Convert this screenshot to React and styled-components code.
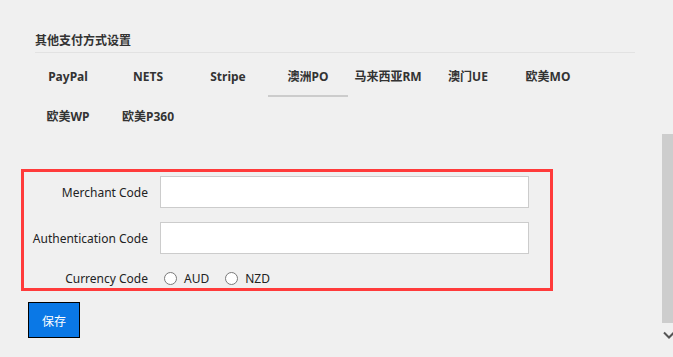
import { useState } from "react";
import styled, { createGlobalStyle } from "styled-components";

const GlobalStyle = createGlobalStyle`
  html, body {
    margin: 0;
    padding: 0;
    background: #f0f0f0;
    font-family: "Noto Sans", "Noto Sans CJK SC", sans-serif;
    color: #333;
  }
`;

const Screen = styled.div`
  display: flex;
  width: 673px;
  height: 357px;
  overflow: hidden;
`;

const Main = styled.div`
  flex: 1;
  padding-left: 21px;
`;

const Heading = styled.div`
  margin: 30px 27px 0 14px;
  height: 22px;
  line-height: 20px;
  font-family: "Noto Sans CJK SC", sans-serif;
  font-size: 12px;
  font-weight: 700;
  color: #333;
  border-bottom: 1px solid #e2e2e2;
`;

const TabGrid = styled.div`
  display: flex;
  flex-wrap: wrap;
  width: 607px;
  margin: 4px 0 0 7px;
`;

const Tab = styled.div`
  width: 80px;
  height: 38px;
  display: flex;
  align-items: center;
  justify-content: center;
  border-bottom: 2px solid ${(p) => (p.$active ? "#cccccc" : "transparent")};
  font-family: "Noto Sans", "Noto Sans CJK SC", sans-serif;
  font-size: 12px;
  font-weight: 700;
  color: #333;
  cursor: pointer;
`;

const FormBox = styled.div`
  width: 526px;
  margin-top: 32px;
  padding: 4px 0 0;
  height: 112px;
  border: 3px solid #ff3b3b;
  display: grid;
  grid-template-columns: 124px 369px;
  grid-auto-rows: auto;
  column-gap: 12px;
  row-gap: 14px;
  align-items: center;
  align-content: start;
`;

const Label = styled.label`
  justify-self: end;
  font-size: 12px;
  color: #222;
  white-space: nowrap;
`;

const TextInput = styled.input`
  box-sizing: border-box;
  width: 369px;
  height: 32px;
  border: 1px solid #cccccc;
  background: #ffffff;
  padding: 0 8px;
  font-size: 12px;
  outline: none;
`;

const RadioGroup = styled.div`
  display: flex;
  align-items: center;
  height: 20px;
  padding-left: 4px;
  gap: 16px;
`;

const RadioOption = styled.label`
  display: flex;
  align-items: center;
  gap: 7px;
  font-size: 12px;
  color: #222;
  cursor: pointer;
`;

const RadioDot = styled.span`
  box-sizing: border-box;
  width: 13px;
  height: 13px;
  border-radius: 50%;
  border: 1px solid #7a7a7a;
  background: #ffffff;
  display: flex;
  align-items: center;
  justify-content: center;

  &::after {
    content: "";
    width: 5px;
    height: 5px;
    border-radius: 50%;
    background: ${(p) => (p.$checked ? "#333" : "transparent")};
  }
`;

const SaveButton = styled.button`
  box-sizing: border-box;
  margin: 11px 0 0 7px;
  width: 52px;
  height: 36px;
  border: 1px solid #000000;
  background: #0a78e6;
  color: #ffffff;
  font-family: "Noto Sans CJK SC", sans-serif;
  font-size: 12px;
  cursor: pointer;
`;

const ScrollColumn = styled.div`
  width: 11px;
  overflow: hidden;
  display: flex;
  flex-direction: column;
`;

const ScrollThumb = styled.div`
  margin-top: 134px;
  height: 189px;
  background: #cdcdcd;
`;

const ScrollArrow = styled.svg`
  margin: 8px 0 0 1px;
  display: block;
`;

const tabs = ["PayPal", "NETS", "Stripe", "澳洲PO", "马来西亚RM", "澳门UE", "欧美MO", "欧美WP", "欧美P360"];

export default function App() {
  const [active, setActive] = useState(3);
  const [currency, setCurrency] = useState(null);

  return (
    <>
      <GlobalStyle />
      <Screen>
        <Main>
          <Heading>其他支付方式设置</Heading>
          <TabGrid>
            {tabs.map((t, i) => (
              <Tab key={t} $active={i === active} onClick={() => setActive(i)}>
                {t}
              </Tab>
            ))}
          </TabGrid>
          <FormBox>
            <Label>Merchant Code</Label>
            <TextInput />
            <Label>Authentication Code</Label>
            <TextInput />
            <Label>Currency Code</Label>
            <RadioGroup>
              {["AUD", "NZD"].map((c) => (
                <RadioOption key={c} onClick={() => setCurrency(c)}>
                  <RadioDot $checked={currency === c} />
                  {c}
                </RadioOption>
              ))}
            </RadioGroup>
          </FormBox>
          <SaveButton>保存</SaveButton>
        </Main>
        <ScrollColumn>
          <ScrollThumb />
          <ScrollArrow width="12" height="8" viewBox="0 0 12 8">
            <path d="M1 1.5 L6 6.5 L11 1.5" fill="none" stroke="#555" strokeWidth="2" />
          </ScrollArrow>
        </ScrollColumn>
      </Screen>
    </>
  );
}
